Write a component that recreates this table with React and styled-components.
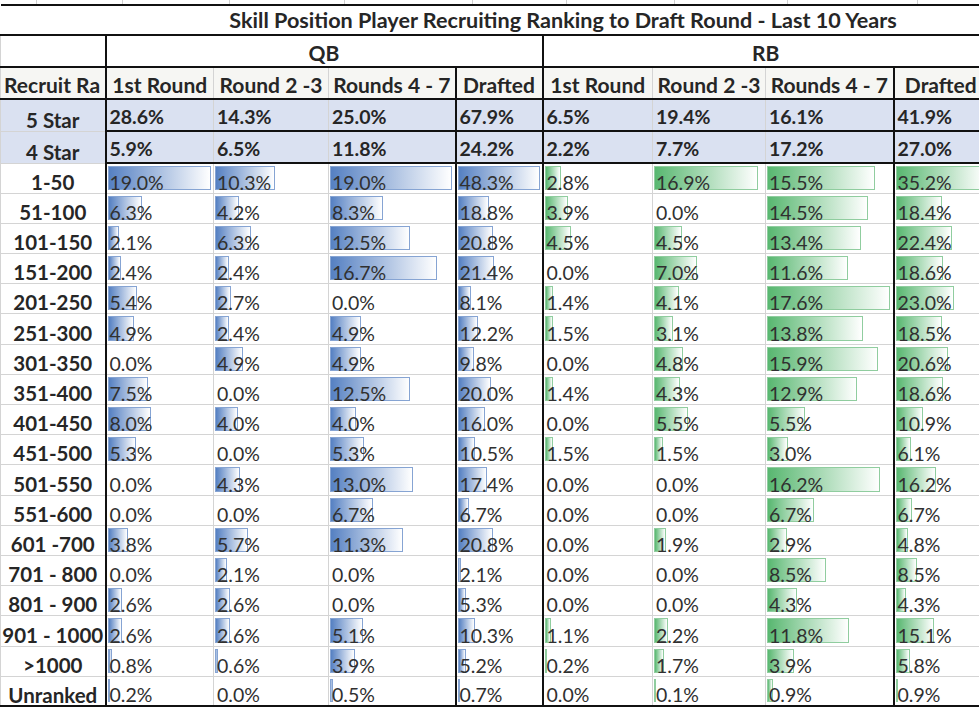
// recruiting ranking -> draft round sheet, drawn like the excel grab
import React from 'react';
import styled, { createGlobalStyle } from 'styled-components';

const GlobalStyle = createGlobalStyle`
  html, body {
    margin: 0;
    padding: 0;
    background: #fff;
    overflow: hidden;
  }
  body {
    font-family: Lato, "Open Sans", sans-serif;
    color: #262626;
  }
`;

// column widths (px) and which data bar scale each column uses
const columns = [
  { w: 105 },
  { w: 108, scale: 'qb', thick: true },
  { w: 115, scale: 'qb' },
  { w: 127, scale: 'qb' },
  { w: 87, scale: 'qbd', thick: true },
  { w: 110, scale: 'rb', thick: true },
  { w: 113, scale: 'rb' },
  { w: 128, scale: 'rb' },
  { w: 94, scale: 'rbd', thick: true },
];

const scales = {
  qb: { max: 19.0, fill: '#5580c2', edge: '#86a4d3' },
  qbd: { max: 48.3, fill: '#5580c2', edge: '#86a4d3' },
  rb: { max: 17.6, fill: '#58b770', edge: '#90cd9f' },
  rbd: { max: 35.2, fill: '#58b770', edge: '#90cd9f' },
};

// first header is clipped by the next column in the sheet
const headers = ['Recruit Ra', '1st Round', 'Round 2 -3', 'Rounds 4 - 7', 'Drafted', '1st Round', 'Round 2 -3', 'Rounds 4 - 7', 'Drafted'];

const stars = [
  ['5 Star', 28.6, 14.3, 25.0, 67.9, 6.5, 19.4, 16.1, 41.9],
  ['4 Star', 5.9, 6.5, 11.8, 24.2, 2.2, 7.7, 17.2, 27.0],
];

const rows = [
  ['1-50', 19.0, 10.3, 19.0, 48.3, 2.8, 16.9, 15.5, 35.2],
  ['51-100', 6.3, 4.2, 8.3, 18.8, 3.9, 0.0, 14.5, 18.4],
  ['101-150', 2.1, 6.3, 12.5, 20.8, 4.5, 4.5, 13.4, 22.4],
  ['151-200', 2.4, 2.4, 16.7, 21.4, 0.0, 7.0, 11.6, 18.6],
  ['201-250', 5.4, 2.7, 0.0, 8.1, 1.4, 4.1, 17.6, 23.0],
  ['251-300', 4.9, 2.4, 4.9, 12.2, 1.5, 3.1, 13.8, 18.5],
  ['301-350', 0.0, 4.9, 4.9, 9.8, 0.0, 4.8, 15.9, 20.6],
  ['351-400', 7.5, 0.0, 12.5, 20.0, 1.4, 4.3, 12.9, 18.6],
  ['401-450', 8.0, 4.0, 4.0, 16.0, 0.0, 5.5, 5.5, 10.9],
  ['451-500', 5.3, 0.0, 5.3, 10.5, 1.5, 1.5, 3.0, 6.1],
  ['501-550', 0.0, 4.3, 13.0, 17.4, 0.0, 0.0, 16.2, 16.2],
  ['551-600', 0.0, 0.0, 6.7, 6.7, 0.0, 0.0, 6.7, 6.7],
  ['601 -700', 3.8, 5.7, 11.3, 20.8, 0.0, 1.9, 2.9, 4.8],
  ['701 - 800', 0.0, 2.1, 0.0, 2.1, 0.0, 0.0, 8.5, 8.5],
  ['801 - 900', 2.6, 2.6, 0.0, 5.3, 0.0, 0.0, 4.3, 4.3],
  ['901 - 1000', 2.6, 2.6, 5.1, 10.3, 1.1, 2.2, 11.8, 15.1],
  ['>1000', 0.8, 0.6, 3.9, 5.2, 0.2, 1.7, 3.9, 5.8],
  ['Unranked', 0.2, 0.0, 0.5, 0.7, 0.0, 0.1, 0.9, 0.9],
];

// the sliver of the sheet above the table
const stripCells = [37, 86, 107, 115, 128, 94, 108, 113, 130, 80];

const App = () => {
  return (
    <>
      <GlobalStyle />
      <GridStrip>
        {stripCells.map((w, i) => <StripCell key={i} $w={w} />)}
      </GridStrip>
      <Sheet>
        <colgroup>
          {columns.map((c, i) => <col key={i} style={{ width: c.w }} />)}
        </colgroup>
        <tbody>
          <tr>
            <TitleCell colSpan={9}>Skill Position Player Recruiting Ranking to Draft Round - Last 10 Years</TitleCell>
          </tr>
          <GroupRow>
            <GroupCell />
            <GroupCell colSpan={4} $thick>QB</GroupCell>
            <GroupCell colSpan={4} $thick>RB</GroupCell>
          </GroupRow>
          <HeadRow>
            {headers.map((h, i) => (
              <HeadCell key={i} $thick={columns[i].thick} $left={i === 0}>{h}</HeadCell>
            ))}
          </HeadRow>
          {stars.map((r) => (
            <StarRow key={r[0]}>
              <LabelCell>{r[0]}</LabelCell>
              {r.slice(1).map((v, i) => (
                <StarCell key={i} $thick={columns[i + 1].thick}>{v.toFixed(1)}%</StarCell>
              ))}
            </StarRow>
          ))}
          {rows.map((r, ri) => (
            <DataRow key={r[0]} $last={ri === rows.length - 1}>
              <LabelCell>{r[0]}</LabelCell>
              {r.slice(1).map((v, i) => {
                const col = columns[i + 1];
                const s = scales[col.scale];
                const width = (v / s.max) * (col.w - 5);
                return (
                  <ValueCell key={i} $thick={col.thick}>
                    {width > 0.05 && (
                      <Bar $fill={s.fill} $edge={s.edge} style={{ width: Math.max(width, 1) }} />
                    )}
                    <Value>{v.toFixed(1)}%</Value>
                  </ValueCell>
                );
              })}
            </DataRow>
          ))}
        </tbody>
      </Sheet>
    </>
  );
};

const GridStrip = styled.div`
  display: flex;
  height: 4px;
  overflow: hidden;
`;

const StripCell = styled.div`
  flex: 0 0 ${p => p.$w}px;
  box-sizing: border-box;
  border-right: 1px solid #d0d0d0;
`;

const Sheet = styled.table`
  border-collapse: collapse;
  table-layout: fixed;
  width: 987px;
  font-size: 19.5px;
`;

const Cell = styled.td`
  padding: 0 3px;
  white-space: nowrap;
  overflow: hidden;
  border: 1px solid #d4d4d4;
  border-left: ${p => (p.$thick ? '2px solid #111' : '1px solid #d4d4d4')};
  vertical-align: bottom;
  line-height: 20px;
`;

const TitleCell = styled(Cell)`
  height: 28px;
  border: none;
  border-top: 2px solid #111;
  border-bottom: 2px solid #111;
  padding-left: 141px;
  text-align: center;
  font-size: 21.6px;
  font-weight: 700;
  line-height: 27px;
`;

const GroupRow = styled.tr`
  height: 32px;
`;

const GroupCell = styled(Cell)`
  border-top: none;
  border-bottom: 2px solid #111;
  border-right: none;
  text-align: center;
  font-size: 21px;
  font-weight: 700;
  line-height: 26px;
  background: #fff;
`;

const HeadRow = styled.tr`
  height: 32px;
  background: #f6f6f3;
`;

const HeadCell = styled(Cell)`
  border-bottom: 2px solid #111;
  text-align: ${p => (p.$left ? 'left' : 'center')};
  font-size: 21px;
  font-weight: 700;
  line-height: 26px;
  padding: 0 ${p => (p.$left ? '0 0 3px' : '1px')};
`;

const StarRow = styled.tr`
  height: 32px;
  background: #dae1f1;
`;

const StarCell = styled(Cell)`
  border-bottom: 2px solid #111;
  font-weight: 700;
  line-height: 27px;
`;

const DataRow = styled.tr`
  height: 30.2px;
  & > td {
    border-bottom: ${p => (p.$last ? '2px solid #111' : '1px solid #d4d4d4')};
  }
`;

const LabelCell = styled(Cell)`
  text-align: center;
  font-size: 20.5px;
  font-weight: 700;
  padding: 0;
  tr:not(:last-child) > & {
    line-height: 22px;
  }
`;

const ValueCell = styled(Cell)`
  position: relative;
  color: #303030;
`;

const Bar = styled.span`
  position: absolute;
  left: 1px;
  top: 2px;
  bottom: 3px;
  box-sizing: border-box;
  border: 1px solid ${p => p.$edge};
  background: linear-gradient(90deg, ${p => p.$fill} 0%, #ffffff 100%);
`;

const Value = styled.span`
  position: relative;
`;

export default App;
